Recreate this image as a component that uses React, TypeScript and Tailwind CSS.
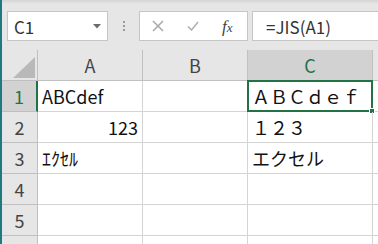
import React from 'react';

const FONT = { fontFamily: '"Noto Sans CJK JP", "Noto Sans", sans-serif' };

const COLS = ['A', 'B', 'C'];
const SELECTED_COL = 'C';

type Cell = { text: string; align?: 'left' | 'right' };

// spreadsheet contents, rows 1..6 x columns A..C
const ROWS: Cell[][] = [
  [{ text: 'ABCdef' }, { text: '' }, { text: 'ＡＢＣｄｅｆ' }],
  [{ text: '123', align: 'right' }, { text: '' }, { text: '１２３' }],
  [{ text: 'ｴｸｾﾙ' }, { text: '' }, { text: 'エクセル' }],
  [{ text: '' }, { text: '' }, { text: '' }],
  [{ text: '' }, { text: '' }, { text: '' }],
  [{ text: '' }, { text: '' }, { text: '' }],
];

const GRID = 'grid grid-cols-[36px_105px_105px_125px_1fr]';

function Toolbar() {
  return (
    <div className="relative h-[50px] shrink-0 bg-[#e6e6e6] flex items-start pt-[11px]">
      <div className="absolute top-0 left-0 right-0 h-[4px] bg-gradient-to-b from-[#d4d4d4] to-[#e6e6e6]" />
      {/* name box */}
      <div className="ml-[5px] w-[101px] h-[30px] bg-white border border-[#c6c6c6] flex items-center justify-between pl-[6px] pr-[6px]">
        <span className="text-[17px] text-[#333] leading-none">C1</span>
        <svg width="8" height="5" viewBox="0 0 8 5">
          <polygon points="0,0 8,0 4,4.5" fill="#6b6b6b" />
        </svg>
      </div>
      {/* separator dots */}
      <div className="w-[31px] h-[30px] flex flex-col items-center justify-center gap-[2px]">
        <span className="w-[2px] h-[2px] bg-[#9a9a9a]" />
        <span className="w-[2px] h-[2px] bg-[#9a9a9a]" />
        <span className="w-[2px] h-[2px] bg-[#9a9a9a]" />
      </div>
      {/* cancel / enter / fx */}
      <div className="w-[109px] h-[30px] bg-white border border-[#c6c6c6] flex items-center">
        <svg className="ml-[12px]" width="12" height="12" viewBox="0 0 12 12">
          <path d="M1 1 L11 11 M11 1 L1 11" stroke="#a8a8a8" strokeWidth="1.5" />
        </svg>
        <svg className="ml-[23px]" width="12" height="10" viewBox="0 0 12 10">
          <path d="M1 5.5 L4.5 9 L11 1" stroke="#b0b0b0" strokeWidth="1.5" fill="none" />
        </svg>
        <span
          className="ml-[23px] text-[17px] italic text-[#444] leading-none"
          style={{ fontFamily: '"Liberation Serif", serif' }}
        >
          f<span className="text-[13px]">x</span>
        </span>
      </div>
      {/* formula input */}
      <div className="ml-[4px] flex-1 h-[30px] bg-white border border-r-0 border-[#c6c6c6] flex items-center pl-[13px]">
        <span className="text-[17px] text-[#333] leading-none">=JIS(A1)</span>
      </div>
    </div>
  );
}

function HeaderRow() {
  return (
    <div className={`${GRID} h-[31px] shrink-0`}>
      <div className="relative bg-[#e6e6e6] border-r border-b border-[#c0c0c0]">
        <svg className="absolute right-[2px] bottom-[2px]" width="22" height="21" viewBox="0 0 22 21">
          <polygon points="22,0 22,21 0,21" fill="#b9b9b9" />
        </svg>
      </div>
      {COLS.map((c) => {
        const sel = c === SELECTED_COL;
        return (
          <div
            key={c}
            className={`flex items-center justify-center border-r border-b text-[18px] ${
              sel ? 'bg-[#d2d2d2] text-[#217346] border-r-[#c0c0c0] border-b-[#217346]' : 'bg-[#e6e6e6] text-[#444] border-[#c0c0c0]'
            }`}
          >
            {c}
          </div>
        );
      })}
      <div className="bg-[#e6e6e6] border-b border-[#c0c0c0]" />
    </div>
  );
}

export default function App() {
  return (
    <div className="w-[378px] h-[244px] overflow-hidden flex bg-white" style={FONT}>
      <div className="w-[2px] bg-[#1f7a80] shrink-0" />
      <div className="flex-1 flex flex-col">
        <Toolbar />
        <HeaderRow />
        {ROWS.map((row, r) => {
          const selRow = r === 0;
          return (
            <div key={r} className={`${GRID} h-[31px] shrink-0`}>
              <div
                className={`flex items-center justify-center border-b text-[18px] ${
                  selRow
                    ? 'bg-[#d2d2d2] text-[#217346] border-b-[#c0c0c0] border-r-2 border-r-[#217346]'
                    : 'bg-[#e6e6e6] text-[#444] border-r border-[#c0c0c0]'
                }`}
              >
                {r + 1}
              </div>
              {row.map((cell, c) => {
                const sel = selRow && COLS[c] === SELECTED_COL;
                return (
                  <div
                    key={c}
                    className={`relative flex items-center border-r border-b border-[#d4d4d4] text-[18px] text-[#111] whitespace-nowrap ${
                      cell.align === 'right' ? 'justify-end pr-[4px]' : 'pl-[4px]'
                    }`}
                  >
                    {cell.text}
                    {sel && (
                      <div className="absolute -top-[1px] -left-[1px] -right-[1px] -bottom-[1px] border-2 border-[#217346]">
                        <span className="absolute -right-[4px] -bottom-[4px] w-[6px] h-[6px] bg-[#217346] border border-white" />
                      </div>
                    )}
                  </div>
                );
              })}
              <div className="border-b border-[#d4d4d4]" />
            </div>
          );
        })}
      </div>
    </div>
  );
}
